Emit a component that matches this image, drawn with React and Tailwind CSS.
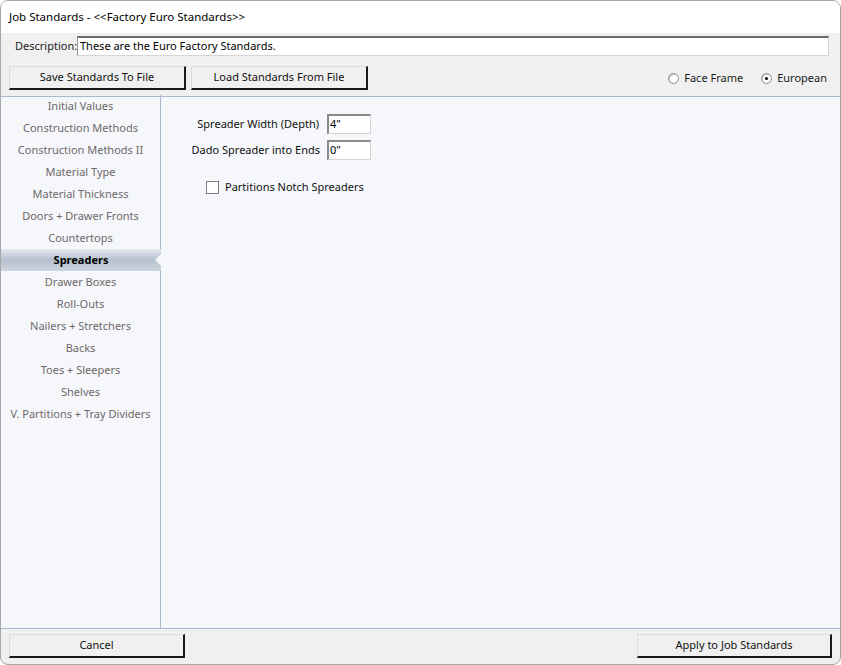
import React from "react";

const navItems = [
  "Initial Values",
  "Construction Methods",
  "Construction Methods II",
  "Material Type",
  "Material Thickness",
  "Doors + Drawer Fronts",
  "Countertops",
  "Spreaders",
  "Drawer Boxes",
  "Roll-Outs",
  "Nailers + Stretchers",
  "Backs",
  "Toes + Sleepers",
  "Shelves",
  "V. Partitions + Tray Dividers",
];

function Btn({ children, className = "" }) {
  return (
    <div
      className={
        "h-[24px] flex items-center justify-center bg-[#f0f0f0] border-t border-l border-t-[#dcdcdc] border-l-[#dcdcdc] border-b-2 border-r-2 border-b-[#1a1a1a] border-r-[#1a1a1a] text-[11px] text-[#111] " +
        className
      }
    >
      {children}
    </div>
  );
}

function Radio({ checked, label }) {
  return (
    <div className="flex items-center gap-[5px]">
      <div className="w-[11px] h-[11px] rounded-full border border-[#8a8a8a] bg-white flex items-center justify-center shadow-[inset_1px_1px_0_#c8c8c8]">
        {checked && <div className="w-[3px] h-[3px] rounded-full bg-black" />}
      </div>
      <span className="text-[11px] text-[#1a1a1a]">{label}</span>
    </div>
  );
}

const inputCls =
  "w-[44px] h-[20px] bg-white border-t-2 border-l-2 border-t-[#8a8a8a] border-l-[#8a8a8a] border-r border-b border-r-[#d4d4d4] border-b-[#d4d4d4] flex items-center pl-[1px] text-[11px] text-black";

export default function App() {
  return (
    <div
      className="w-[841px] h-[665px] flex flex-col bg-[#f0f0f0] border border-[#a6a6a6] rounded-lg overflow-hidden"
      style={{ fontFamily: '"Noto Sans", "Open Sans", sans-serif' }}
    >
      {/* Title */}
      <div className="h-[32px] bg-white flex items-center pl-[8px] text-[11.5px] text-black shrink-0">
        Job Standards - &lt;&lt;Factory Euro Standards&gt;&gt;
      </div>

      {/* Description row */}
      <div className="h-[28px] flex items-start pt-[3px] pl-[14px] pr-[11px] shrink-0">
        <span className="text-[11px] text-[#222] w-[62px] h-[20px] flex items-center whitespace-nowrap">Description:</span>
        <div className="flex-1 h-[20px] bg-white border-t-2 border-t-[#6a6a6a] border-l border-l-[#9a9a9a] border-r border-r-[#d6d6d6] border-b border-b-[#d6d6d6] flex items-center pl-[2px] text-[11px] text-black">
          These are the Euro Factory Standards.
        </div>
      </div>

      {/* Buttons row */}
      <div className="h-[36px] flex items-start pt-[5px] pl-[8px] pr-[13px] border-b border-[#a9b9cc] shrink-0">
        <Btn className="w-[177px]">Save Standards To File</Btn>
        <Btn className="w-[177px] ml-[5px]">Load Standards From File</Btn>
        <div className="flex-1" />
        <div className="flex items-center gap-[18px] h-[24px]">
          <Radio label="Face Frame" />
          <Radio checked label="European" />
        </div>
      </div>

      {/* Main */}
      <div className="flex-1 flex bg-[#f5f7fb] border-b border-[#a9b9cc] min-h-0">
        <div className="w-[160px] border-r border-[#a9b9cc] shrink-0 flex flex-col mt-[-2px]">
          {navItems.map((item) =>
            item === "Spreaders" ? (
              <div
                key={item}
                className="relative h-[22px] flex items-center justify-center text-[11px] font-bold text-black bg-gradient-to-b from-[#e4e8ee] via-[#b5c0cf] to-[#cdd4de] mr-[-1px]"
              >
                {item}
                <div
                  className="absolute right-0 top-[5px] w-[6px] h-[12px] bg-[#f5f7fb]"
                  style={{ clipPath: "polygon(100% 0, 0 50%, 100% 100%)" }}
                />
              </div>
            ) : (
              <div
                key={item}
                className="h-[22px] flex items-center justify-center text-[11px] text-[#6f6969] whitespace-nowrap"
              >
                {item}
              </div>
            )
          )}
        </div>

        <div className="flex-1 pt-[17px]">
          <div className="flex flex-col gap-[6px] w-[210px]">
            <div className="flex items-center justify-end">
              <span className="text-[11px] text-[#111] mr-[8px]">Spreader Width (Depth)</span>
              <div className={inputCls}>4"</div>
            </div>
            <div className="flex items-center justify-end">
              <span className="text-[11px] text-[#111] mr-[7px]">Dado Spreader into Ends</span>
              <div className={inputCls}>0"</div>
            </div>
          </div>
          <div className="flex items-center h-[13px] mt-[21px] ml-[45px] gap-[6px]">
            <div className="w-[13px] h-[13px] bg-white border border-[#7f7f7f]" />
            <span className="text-[11px] text-[#111]">Partitions Notch Spreaders</span>
          </div>
        </div>
      </div>

      {/* Bottom */}
      <div className="h-[35px] flex items-start pt-[5px] pl-[8px] pr-[8px] shrink-0">
        <Btn className="w-[176px]">Cancel</Btn>
        <div className="flex-1" />
        <Btn className="w-[195px]">Apply to Job Standards</Btn>
      </div>
    </div>
  );
}
